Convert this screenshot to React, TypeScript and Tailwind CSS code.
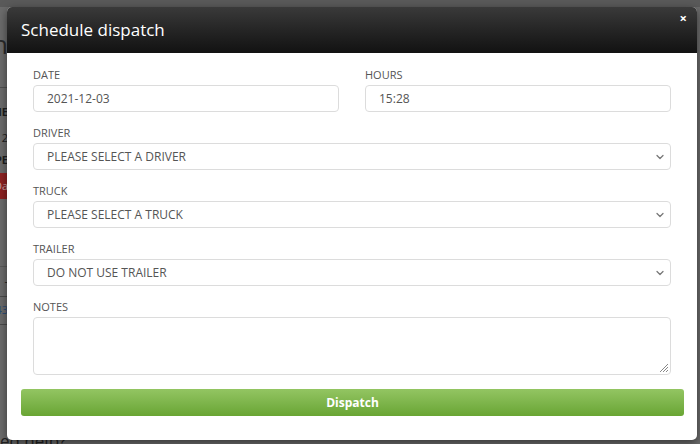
import { ChevronDown } from "lucide-react"

const font = { fontFamily: '"Open Sans", "Liberation Sans", sans-serif' }

function Field({ label, children }: { label: string; children: React.ReactNode }) {
  return (
    <div className="flex flex-col">
      <label className="h-[14px] text-[11px] leading-[14px] text-[#555] mb-[3px]">{label}</label>
      {children}
    </div>
  )
}

function TextInput({ value }: { value: string }) {
  return (
    <div className="h-[27px] rounded-[4px] border border-[#dcdcdc] bg-white px-[13px] flex items-center text-[12px] text-[#555]">
      {value}
    </div>
  )
}

function Select({ value }: { value: string }) {
  return (
    <div className="h-[27px] rounded-[4px] border border-[#dcdcdc] bg-white pl-[13px] pr-[4px] flex items-center justify-between text-[12px] text-[#555]">
      <span>{value}</span>
      <ChevronDown className="w-[12px] h-[12px] text-[#777]" strokeWidth={2.5} />
    </div>
  )
}

export default function App() {
  return (
    <div className="relative w-[700px] h-[444px] overflow-hidden bg-[#6c6c6c]" style={font}>
      {/* page behind the overlay */}
      <div className="flex flex-col h-full">
        <div className="h-[7px] bg-[#5a5a5a]" />
        <div className="flex h-full">
          <div className="w-[8px] flex flex-col items-end overflow-hidden text-[#1e1e1e]">
            <div className="h-[81px] flex items-end justify-end border-b border-[#4f4f4f] w-full pb-[30px] pt-[10px]">
              <span className="whitespace-nowrap text-[26px] leading-none text-[#2a2a2a]">Dispatch</span>
            </div>
            <div className="h-[26px] mt-[11px] flex items-center justify-end text-[11px] font-bold whitespace-nowrap">NAME</div>
            <div className="h-[26px] flex items-center justify-end text-[11px] whitespace-nowrap">2</div>
            <div className="h-[18px] flex items-center justify-end text-[11px] font-bold whitespace-nowrap">TYPE</div>
            <div className="h-[26px] mt-[4px] w-full bg-[#8e2222] flex items-center justify-end text-[11px] text-[#c9a0a0] whitespace-nowrap">Da</div>
            <div className="h-[68px] w-full border-b border-[#5a5a5a]" />
            <div className="h-[30px] w-full border-b border-[#4a4a4a] flex items-center justify-end text-[11px]">-</div>
            <div className="h-[28px] w-full border-b border-[#4a4a4a] flex items-center justify-end text-[11px] text-[#2d4d77] whitespace-nowrap">43</div>
          </div>
          <div className="flex-1" />
        </div>
        <div className="absolute left-0 bottom-[-9px] text-[17px] text-[#222] whitespace-nowrap">ed help?</div>
      </div>

      {/* modal */}
      <div className="absolute inset-0 flex pt-[7px] pl-[7px] pr-[3px]">
        <div className="w-[690px] h-[433px] bg-white rounded-[5px] overflow-hidden shadow-[0_3px_10px_rgba(0,0,0,0.5)] flex flex-col">
          <div className="h-[46px] shrink-0 bg-gradient-to-b from-[#3a3a3a] to-[#121212] flex items-center justify-between pl-[14px] pr-[10px]">
            <h3 className="text-[17px] text-white leading-none pb-[2px]">Schedule dispatch</h3>
            <span className="self-start mt-[5px] text-white text-[13px] font-bold leading-none">×</span>
          </div>
          <div className="flex flex-col px-[14px] pt-[15px] pb-[25px]">
            <div className="flex flex-col gap-[14px] px-[12px]">
              <div className="grid grid-cols-2 gap-[26px]">
                <Field label="DATE">
                  <TextInput value="2021-12-03" />
                </Field>
                <Field label="HOURS">
                  <TextInput value="15:28" />
                </Field>
              </div>
              <Field label="DRIVER">
                <Select value="PLEASE SELECT A DRIVER" />
              </Field>
              <Field label="TRUCK">
                <Select value="PLEASE SELECT A TRUCK" />
              </Field>
              <Field label="TRAILER">
                <Select value="DO NOT USE TRAILER" />
              </Field>
              <Field label="NOTES">
                <div className="relative h-[58px] rounded-[4px] border border-[#dcdcdc] bg-white">
                  <svg className="absolute right-[1px] bottom-[1px]" width="11" height="11" viewBox="0 0 11 11">
                    <path d="M10 2 L2 10 M10 5 L5 10 M10 8 L8 10" stroke="#888" strokeWidth="1" />
                  </svg>
                </div>
              </Field>
            </div>
            <button className="mt-[14px] h-[27px] w-[663px] rounded-[3px] bg-gradient-to-b from-[#93c562] to-[#69a533] text-white text-[12px] font-bold">
              Dispatch
            </button>
          </div>
        </div>
      </div>
    </div>
  )
}
